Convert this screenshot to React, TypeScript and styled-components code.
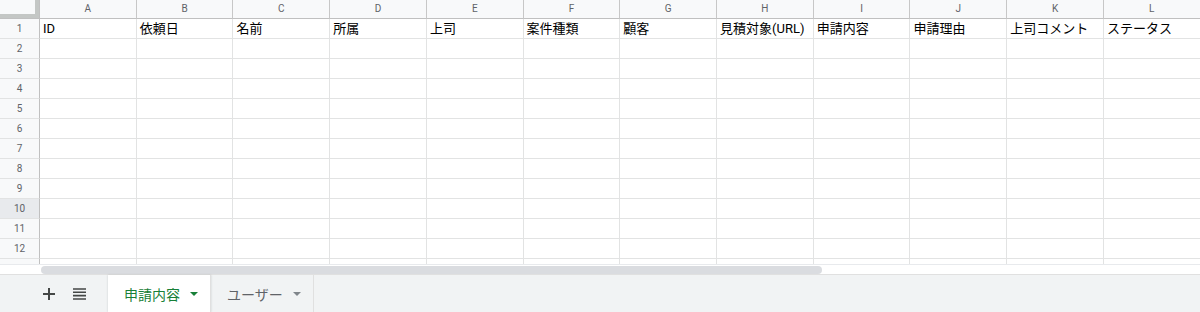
import React from "react";
import styled, { createGlobalStyle } from "styled-components";

const GlobalStyle = createGlobalStyle`
  html, body { margin: 0; padding: 0; background: #fff; }
  body {
    width: 1200px;
    height: 312px;
    overflow: hidden;
    font-family: Roboto, "Noto Sans CJK JP", "Noto Sans", sans-serif;
  }
`;

const COLUMNS = ["A", "B", "C", "D", "E", "F", "G", "H", "I", "J", "K", "L"];
const TITLES = [
  "ID",
  "依頼日",
  "名前",
  "所属",
  "上司",
  "案件種類",
  "顧客",
  "見積対象(URL)",
  "申請内容",
  "申請理由",
  "上司コメント",
  "ステータス",
];
const ROW_COUNT = 12;
const ACTIVE_ROW = 10;

const Page = styled.div`
  display: flex;
  flex-direction: column;
  width: 1200px;
  height: 312px;
  overflow: hidden;
`;

const GridViewport = styled.div`
  height: 264px;
  overflow: hidden;
`;

const Grid = styled.div`
  display: grid;
  grid-template-columns: 40px repeat(12, 96.73px);
  grid-template-rows: 19px;
  grid-auto-rows: 20px;
  width: 1200px;
`;

const Corner = styled.div`
  background: #f8f9fa;
  border-right: 1px solid #c0c0c0;
  border-bottom: 1px solid #c0c0c0;
  box-sizing: border-box;
  display: flex;
`;

const CornerInner = styled.div`
  width: 35px;
  height: 14px;
  border-right: 4px solid #c4c7c5;
  border-bottom: 4px solid #c4c7c5;
`;

const ColHeader = styled.div`
  background: #f8f9fa;
  border-right: 1px solid #c7c7c7;
  border-bottom: 1px solid #c0c0c0;
  box-sizing: border-box;
  color: #5f6368;
  font-size: 10px;
  line-height: 18px;
  text-align: center;
`;

const RowHeader = styled.div<{ $active?: boolean }>`
  background: ${(p) => (p.$active ? "#e8eaed" : "#f8f9fa")};
  border-right: 1px solid #c0c0c0;
  border-bottom: 1px solid #e2e3e3;
  box-sizing: border-box;
  color: #5f6368;
  font-size: 10px;
  line-height: 19px;
  text-align: center;
`;

const Cell = styled.div`
  border-right: 1px solid #e2e3e3;
  border-bottom: 1px solid #e2e3e3;
  box-sizing: border-box;
  color: #000;
  font-size: 13px;
  line-height: 19px;
  padding: 0 3px;
  white-space: nowrap;
  overflow: hidden;
`;

const ScrollTrack = styled.div`
  height: 10px;
  padding-left: 41px;
  background: #fff;
  border-top: 1px solid #e8eaed;
  box-sizing: border-box;
  display: flex;
  align-items: center;
`;

const ScrollThumb = styled.div`
  width: 781px;
  height: 8px;
  border-radius: 4px;
  background: #dadce0;
`;

const TabBar = styled.div`
  flex: 1;
  display: flex;
  align-items: stretch;
  background: #f1f3f4;
  border-top: 1px solid #e0e0e0;
`;

const BarButtons = styled.div`
  display: flex;
  align-items: center;
  gap: 14px;
  padding-left: 41px;
  width: 108px;
  box-sizing: border-box;
`;

const IconButton = styled.div`
  width: 16px;
  height: 16px;
  display: flex;
  align-items: center;
  justify-content: center;
  color: #444746;
`;

const Tab = styled.div<{ $active?: boolean }>`
  width: 103px;
  box-sizing: border-box;
  display: flex;
  align-items: center;
  gap: 10px;
  padding-left: 16px;
  font-size: 14px;
  background: ${(p) => (p.$active ? "#fff" : "transparent")};
  color: ${(p) => (p.$active ? "#188038" : "#5f6368")};
  border-right: 1px solid #e0e0e0;
  box-shadow: ${(p) => (p.$active ? "0 0 2px rgba(60,64,67,0.2)" : "none")};
`;

const Caret = styled.span<{ $color: string }>`
  width: 0;
  height: 0;
  border-left: 4px solid transparent;
  border-right: 4px solid transparent;
  border-top: 4px solid ${(p) => p.$color};
`;

const PlusIcon = () => (
  <svg width="14" height="14" viewBox="0 0 14 14">
    <path d="M7 1v12M1 7h12" stroke="currentColor" strokeWidth="2" />
  </svg>
);

const ListIcon = () => (
  <svg width="13" height="12" viewBox="0 0 13 12">
    <path
      d="M0 1h13M0 4.3h13M0 7.6h13M0 11h13"
      stroke="currentColor"
      strokeWidth="1.6"
    />
  </svg>
);

export default function App() {
  const rows = Array.from({ length: ROW_COUNT }, (_, i) => i + 1);

  return (
    <Page>
      <GlobalStyle />
      <GridViewport>
        <Grid>
          <Corner>
            <CornerInner />
          </Corner>
          {COLUMNS.map((c) => (
            <ColHeader key={c}>{c}</ColHeader>
          ))}
          {rows.map((r) => (
            <React.Fragment key={r}>
              <RowHeader $active={r === ACTIVE_ROW}>{r}</RowHeader>
              {COLUMNS.map((c, idx) => (
                <Cell key={c}>{r === 1 ? TITLES[idx] : ""}</Cell>
              ))}
            </React.Fragment>
          ))}
          {/* partially visible next row, its label is hidden under the scrollbar */}
          <RowHeader />
          {COLUMNS.map((c) => (
            <Cell key={c} />
          ))}
        </Grid>
      </GridViewport>
      <ScrollTrack>
        <ScrollThumb />
      </ScrollTrack>
      <TabBar>
        <BarButtons>
          <IconButton>
            <PlusIcon />
          </IconButton>
          <IconButton>
            <ListIcon />
          </IconButton>
        </BarButtons>
        <Tab $active>
          申請内容
          <Caret $color="#188038" />
        </Tab>
        <Tab>
          ユーザー
          <Caret $color="#80868b" />
        </Tab>
      </TabBar>
    </Page>
  );
}
